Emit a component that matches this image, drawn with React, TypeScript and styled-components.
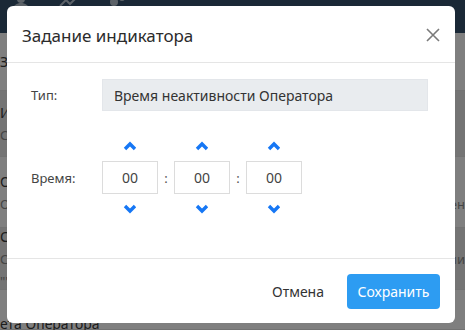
import styled, { createGlobalStyle } from 'styled-components';

const GlobalStyle = createGlobalStyle`
  html, body {
    margin: 0;
    padding: 0;
    width: 465px;
    height: 330px;
    overflow: hidden;
    font-family: 'Noto Sans', 'Open Sans', sans-serif;
  }
`;

const Page = styled.div`
  position: relative;
  width: 465px;
  height: 330px;
  overflow: hidden;
  background: #ffffff;
`;

const TopBar = styled.div`
  height: 33px;
  background: #34506d;
  display: flex;
  align-items: flex-start;
  gap: 26px;
  padding-left: 10px;
  box-sizing: border-box;
`;

const TopIcon = styled.svg`
  width: 22px;
  height: 16px;
  margin-top: -6px;
`;

const ListRow = styled.div<{ $height: number; $shade?: boolean }>`
  height: ${({ $height }) => $height}px;
  background: ${({ $shade }) => ($shade ? '#e8e8e8' : '#ffffff')};
  border-bottom: 1px solid #e4e4e4;
  box-sizing: border-box;
  display: flex;
  flex-direction: column;
  justify-content: center;
  gap: 4px;
  font-size: 14px;
  white-space: nowrap;
`;

const LineWrap = styled.div`
  display: flex;
  justify-content: space-between;
`;

const RowTitle = styled.span`
  color: #3a3a3a;
`;

const RowSub = styled.span`
  color: #8a8a8a;
  font-size: 13px;
`;

const Overlay = styled.div`
  position: absolute;
  inset: 0;
  background: rgba(0, 0, 0, 0.5);
`;

const Modal = styled.div`
  margin: 6px 0 0 7px;
  width: 448px;
  height: 317px;
  background: #fff;
  border-radius: 6px;
  display: flex;
  flex-direction: column;
  overflow: hidden;
`;

const Header = styled.div`
  height: 57px;
  flex-shrink: 0;
  border-bottom: 1px solid #e5e5e5;
  box-sizing: border-box;
  display: flex;
  align-items: center;
  justify-content: space-between;
  padding: 2px 12px 0 15px;
`;

const Title = styled.h2`
  margin: 0;
  font-size: 17px;
  font-weight: 400;
  color: #2b2b2b;
`;

const CloseButton = styled.button`
  border: 0;
  background: none;
  padding: 0;
  width: 20px;
  height: 20px;
  display: flex;
  align-items: center;
  justify-content: center;
  cursor: pointer;
`;

const Body = styled.div`
  flex: 1;
  padding: 16px 27px 0 23px;
  display: flex;
  flex-direction: column;
`;

const FieldRow = styled.div<{ $top?: number }>`
  display: flex;
  align-items: center;
  margin-top: ${({ $top }) => $top ?? 0}px;
`;

const Label = styled.span`
  width: 72px;
  flex-shrink: 0;
  font-size: 13px;
  color: #444;
  padding-left: 1px;
  box-sizing: border-box;
`;

const ReadOnlyInput = styled.div`
  flex: 1;
  height: 32px;
  background: #e9ecef;
  border: 1px solid #e3e6ea;
  box-sizing: border-box;
  display: flex;
  align-items: center;
  padding-left: 11px;
  font-size: 14px;
  color: #333;
`;

const TimeGroup = styled.div`
  display: flex;
  align-items: center;
`;

const TimeColumn = styled.div`
  display: flex;
  flex-direction: column;
  align-items: center;
  gap: 4px;
`;

const Spin = styled.button`
  border: 0;
  background: none;
  padding: 0;
  width: 56px;
  height: 22px;
  display: flex;
  align-items: center;
  justify-content: center;
  cursor: pointer;
`;

const TimeBox = styled.div`
  width: 56px;
  height: 33px;
  border: 1px solid #dcdcdc;
  box-sizing: border-box;
  display: flex;
  align-items: center;
  justify-content: center;
  font-size: 14px;
  color: #444;
`;

const Colon = styled.span`
  width: 16px;
  text-align: center;
  font-size: 13px;
  color: #555;
`;

const Footer = styled.div`
  height: 65px;
  flex-shrink: 0;
  border-top: 1px solid #e5e5e5;
  box-sizing: border-box;
  display: flex;
  align-items: center;
  justify-content: flex-end;
  gap: 11px;
  padding: 0 15px 0 0;
`;

const TextButton = styled.button`
  border: 0;
  background: none;
  font-family: inherit;
  font-size: 14px;
  color: #333;
  padding: 0 12px;
  height: 35px;
  cursor: pointer;
`;

const PrimaryButton = styled.button`
  border: 0;
  background: #2d9cf2;
  color: #fff;
  font-family: inherit;
  font-size: 14px;
  height: 35px;
  width: 93px;
  border-radius: 4px;
  cursor: pointer;
`;

const Chevron = ({ up }: { up?: boolean }) => (
  <svg width="14" height="10" viewBox="0 0 14 10">
    <polyline
      points={up ? '2,8 7,3 12,8' : '2,2 7,7 12,2'}
      fill="none"
      stroke="#1677f5"
      strokeWidth="3.4"
      strokeLinejoin="miter"
      strokeLinecap="butt"
    />
  </svg>
);

const TimeUnit = () => (
  <TimeColumn>
    <Spin>
      <Chevron up />
    </Spin>
    <TimeBox>00</TimeBox>
    <Spin>
      <Chevron />
    </Spin>
  </TimeColumn>
);

const App = () => {
  return (
    <Page>
      <GlobalStyle />
      <TopBar>
        <TopIcon viewBox="0 0 22 16">
          <circle cx="11" cy="5" r="4" fill="#b8c4d0" />
          <path d="M3 16c0-5 4-7 8-7s8 2 8 7z" fill="#b8c4d0" />
        </TopIcon>
        <TopIcon viewBox="0 0 22 16">
          <polyline points="2,12 8,6 12,10 20,2" fill="none" stroke="#b8c4d0" strokeWidth="2" />
        </TopIcon>
        <TopIcon viewBox="0 0 22 16">
          <circle cx="8" cy="8" r="4" fill="#b8c4d0" />
          <circle cx="16" cy="4" r="3" fill="#b8c4d0" />
        </TopIcon>
      </TopBar>
      <ListRow $height={58}>
        <RowTitle>За</RowTitle>
      </ListRow>
      <ListRow $height={66} $shade>
        <RowTitle>Ин</RowTitle>
        <RowSub>Ст</RowSub>
      </ListRow>
      <ListRow $height={71}>
        <RowTitle>Об</RowTitle>
        <LineWrap>
          <RowSub>Ож</RowSub>
          <RowSub>ен</RowSub>
        </LineWrap>
      </ListRow>
      <ListRow $height={62} $shade>
        <RowTitle>Ср</RowTitle>
        <LineWrap>
          <RowSub>Ст</RowSub>
          <RowSub>ии</RowSub>
        </LineWrap>
        <RowSub>""</RowSub>
      </ListRow>
      <ListRow $height={40}>
        <RowTitle style={{ marginTop: 28 }}>ета Оператора</RowTitle>
      </ListRow>
      <Overlay>
        <Modal>
          <Header>
            <Title>Задание индикатора</Title>
            <CloseButton aria-label="Закрыть">
              <svg width="16" height="16" viewBox="0 0 16 16">
                <path d="M2 2L14 14M14 2L2 14" stroke="#7a7a7a" strokeWidth="1.6" />
              </svg>
            </CloseButton>
          </Header>
          <Body>
            <FieldRow>
              <Label>Тип:</Label>
              <ReadOnlyInput>Время неактивности Оператора</ReadOnlyInput>
            </FieldRow>
            <FieldRow $top={24}>
              <Label>Время:</Label>
              <TimeGroup>
                <TimeUnit />
                <Colon>:</Colon>
                <TimeUnit />
                <Colon>:</Colon>
                <TimeUnit />
              </TimeGroup>
            </FieldRow>
          </Body>
          <Footer>
            <TextButton>Отмена</TextButton>
            <PrimaryButton>Сохранить</PrimaryButton>
          </Footer>
        </Modal>
      </Overlay>
    </Page>
  );
};

export default App;
